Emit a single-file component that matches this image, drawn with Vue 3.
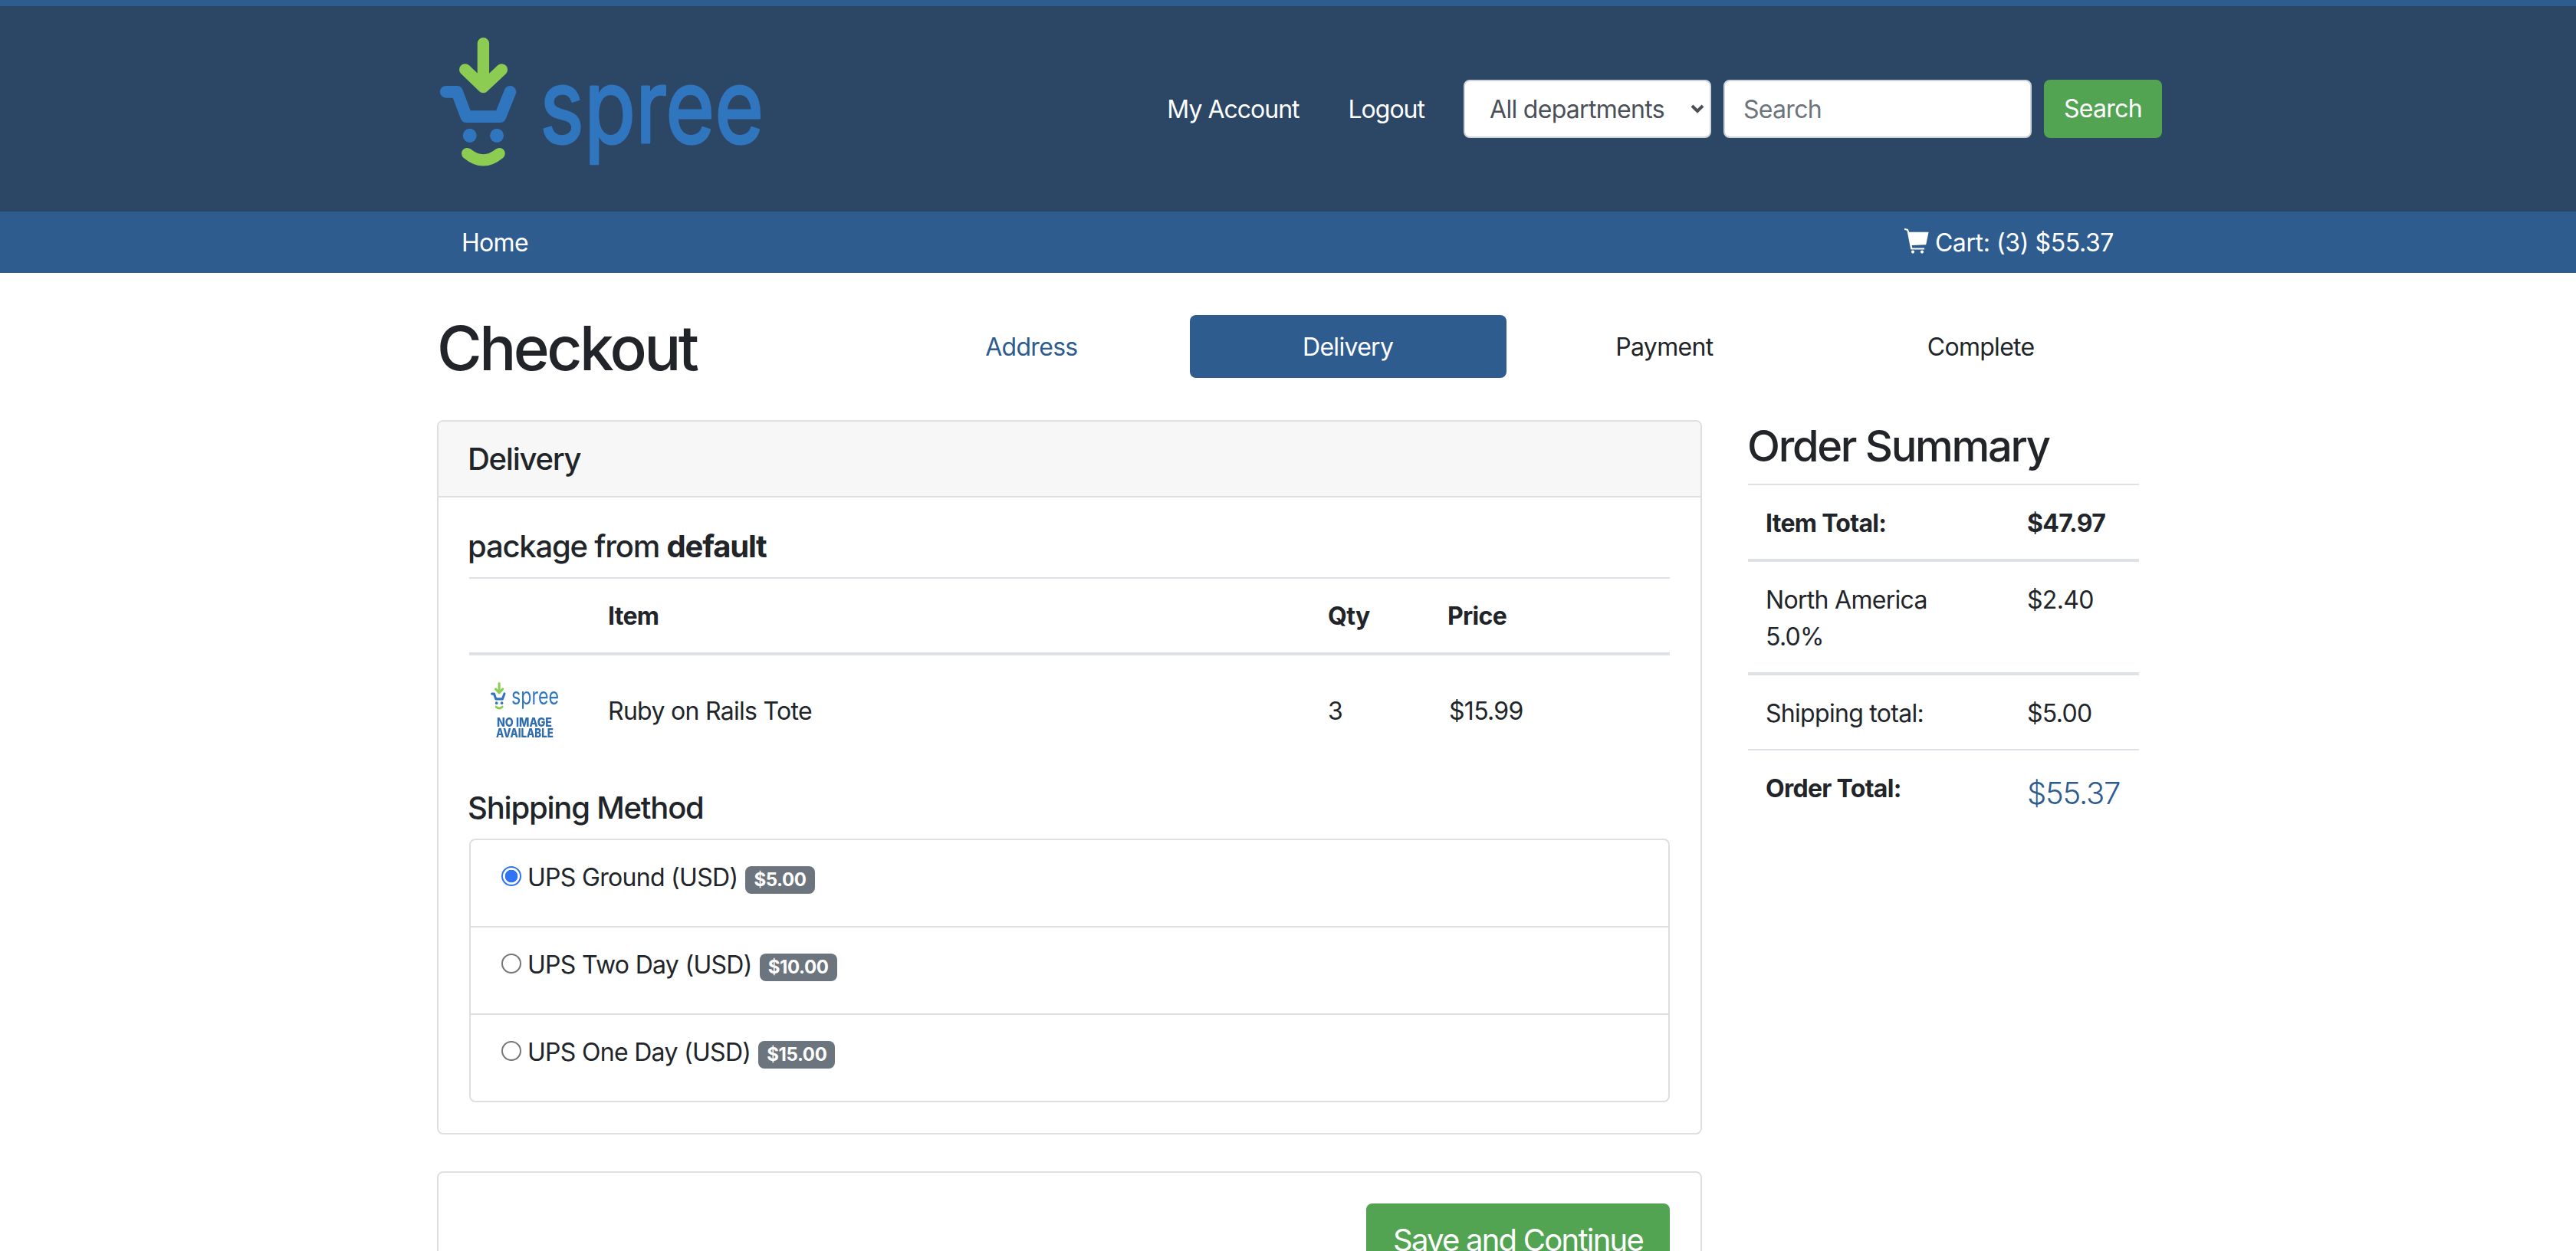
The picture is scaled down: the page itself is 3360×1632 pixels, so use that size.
<script setup>
const steps = [
  { label: 'Address', state: 'done' },
  { label: 'Delivery', state: 'active' },
  { label: 'Payment', state: '' },
  { label: 'Complete', state: '' }
]

const methods = [
  { name: 'UPS Ground (USD)', cost: '$5.00', checked: true },
  { name: 'UPS Two Day (USD)', cost: '$10.00', checked: false },
  { name: 'UPS One Day (USD)', cost: '$15.00', checked: false }
]
</script>

<template>
  <div class="page">
    <header class="masthead">
      <div class="container masthead-inner">
        <a class="logo" href="#" aria-label="Spree">
          <svg width="427" height="177" viewBox="150 130 1280 530">
            <g fill="none" stroke-linecap="round" stroke-linejoin="round">
              <path d="M331 168V338M260 270L331 338L403 270" stroke="#8ccc52" stroke-width="46" />
              <path d="M185 357H228L265 454H397L436 357" stroke="#3076bf" stroke-width="47" />
              <path d="M268 598Q331 650 394 598" stroke="#8ccc52" stroke-width="44" />
            </g>
            <circle cx="278" cy="528" r="27" fill="#3076bf" />
            <circle cx="384" cy="528" r="27" fill="#3076bf" />
            <text
              class="logo-word"
              x="552"
              y="555"
              textLength="875"
              lengthAdjust="spacingAndGlyphs"
            >spree</text>
          </svg>
        </a>
        <nav class="account-nav">
          <a href="#">My Account</a>
          <a href="#">Logout</a>
        </nav>
        <form class="search" @submit.prevent>
          <div class="select-wrap">
            <select class="dept">
              <option>All departments</option>
            </select>
            <svg class="chevron" width="20" height="14" viewBox="0 0 20 14">
              <path d="M3 3l7 7 7-7" fill="none" stroke="#495057" stroke-width="4" />
            </svg>
          </div>
          <input class="search-input" type="text" placeholder="Search" />
          <button class="search-btn" type="submit">Search</button>
        </form>
      </div>
    </header>

    <div class="mainbar">
      <div class="container mainbar-inner">
        <a href="#">Home</a>
        <a href="#" class="cart">
          <svg width="36" height="36" viewBox="70 50 105 105">
            <path
              fill="#fff"
              d="M76 55L90 59L94 70H168L158 118L104 120L106 130H152V136H100L86 64L76 62Z"
            />
            <circle cx="108" cy="145" r="6" fill="#fff" />
            <circle cx="143" cy="145" r="6" fill="#fff" />
          </svg>
          <span>Cart: (3) $55.37</span>
        </a>
      </div>
    </div>

    <main class="container content">
      <div class="checkout-head">
        <h1>Checkout</h1>
        <ol class="steps">
          <li v-for="step in steps" :key="step.label" :class="['step', step.state]">
            {{ step.label }}
          </li>
        </ol>
      </div>

      <div class="columns">
        <div class="left">
          <section class="card">
            <h2 class="card-header">Delivery</h2>
            <div class="card-body">
              <h5 class="package">package from <b>default</b></h5>
              <table class="items">
                <colgroup>
                  <col style="width: 157px" />
                  <col />
                  <col style="width: 156px" />
                  <col style="width: 314px" />
                </colgroup>
                <thead>
                  <tr>
                    <th></th>
                    <th>Item</th>
                    <th>Qty</th>
                    <th>Price</th>
                  </tr>
                </thead>
                <tbody>
                  <tr>
                    <td class="thumb-cell">
                      <div class="thumb">
                        <svg width="100" height="98" viewBox="0 0 100 98">
                          <g transform="translate(4 12) scale(0.065 0.071) translate(-160 -145)">
                            <g fill="none" stroke-linecap="round" stroke-linejoin="round">
                              <path d="M331 168V338M260 270L331 338L403 270" stroke="#8ccc52" stroke-width="46" />
                              <path d="M185 357H228L265 454H397L436 357" stroke="#3076bf" stroke-width="47" />
                              <path d="M268 598Q331 650 394 598" stroke="#8ccc52" stroke-width="44" />
                            </g>
                            <circle cx="278" cy="528" r="27" fill="#3076bf" />
                            <circle cx="384" cy="528" r="27" fill="#3076bf" />
                          </g>
                          <text class="thumb-word" x="31" y="41" textLength="62" lengthAdjust="spacingAndGlyphs">spree</text>
                          <text class="thumb-note" x="12" y="70" textLength="72" lengthAdjust="spacingAndGlyphs">NO IMAGE</text>
                          <text class="thumb-note" x="11" y="84" textLength="75" lengthAdjust="spacingAndGlyphs">AVAILABLE</text>
                        </svg>
                      </div>
                    </td>
                    <td>Ruby on Rails Tote</td>
                    <td>3</td>
                    <td class="unit-price">$15.99</td>
                  </tr>
                </tbody>
              </table>

              <h5 class="shipping-title">Shipping Method</h5>
              <ul class="methods">
                <li v-for="method in methods" :key="method.name" class="method">
                  <label>
                    <input type="radio" name="ship" :checked="method.checked" />
                    <span class="method-name">{{ method.name }}</span>
                    <span class="badge">{{ method.cost }}</span>
                  </label>
                </li>
              </ul>
            </div>
          </section>

          <section class="card actions">
            <button class="save" type="button">Save and Continue</button>
          </section>
        </div>

        <aside class="summary">
          <h3>Order Summary</h3>
          <table class="totals">
            <colgroup>
              <col style="width: 339px" />
              <col />
            </colgroup>
            <tbody>
              <tr class="heavy">
                <td><b>Item Total:</b></td>
                <td><b>$47.97</b></td>
              </tr>
              <tr class="heavy">
                <td>North America 5.0%</td>
                <td>$2.40</td>
              </tr>
              <tr>
                <td>Shipping total:</td>
                <td>$5.00</td>
              </tr>
              <tr class="grand">
                <td><b>Order Total:</b></td>
                <td class="grand-value">$55.37</td>
              </tr>
            </tbody>
          </table>
        </aside>
      </div>
    </main>
  </div>
</template>

<style>
html,
body {
  margin: 0;
  background: #fff;
}
</style>

<style scoped>
* {
  box-sizing: border-box;
}

svg {
  overflow: visible;
}

.page {
  height: 1632px;
  overflow: hidden;
  font-family: Inter, "Liberation Sans", sans-serif;
  font-size: 32px;
  line-height: 48px;
  letter-spacing: -0.7px;
  color: #212529;
}

a {
  color: #fff;
  text-decoration: none;
}

.container {
  width: 2280px;
  margin: 0 auto;
}

.masthead {
  height: 276px;
  background: #2c4766;
  border-top: 8px solid #2e5c8f;
}

.masthead-inner {
  height: 100%;
  display: flex;
  align-items: center;
}

.logo {
  display: block;
  margin: 0 0 20px 30px;
  height: 177px;
}

.logo-word {
  font-family: Inter, sans-serif;
  font-size: 400px;
  letter-spacing: 0;
  fill: #3076bf;
  stroke: #3076bf;
  stroke-width: 9px;
  stroke-linejoin: round;
}

.account-nav {
  margin-left: auto;
  margin-right: 51px;
  padding-top: 2px;
  display: flex;
  gap: 64px;
  letter-spacing: -1px;
}

.search {
  display: flex;
  gap: 16px;
}

.select-wrap {
  position: relative;
}

.dept,
.search-input,
.search-btn,
.save {
  font: inherit;
  letter-spacing: -0.7px;
}

.dept {
  display: block;
  width: 323px;
  height: 76px;
  padding: 2px 40px 0 32px;
  appearance: none;
  background: #fff;
  border: 2px solid #ced4da;
  border-radius: 8px;
  color: #495057;
}

.chevron {
  position: absolute;
  right: 8px;
  top: 31px;
  pointer-events: none;
}

.search-input {
  width: 402px;
  height: 76px;
  padding: 0 24px;
  background: #fff;
  border: 2px solid #ced4da;
  border-radius: 8px;
  color: #495057;
}

.search-input::placeholder {
  color: #6c757d;
  opacity: 1;
}

.search-btn {
  width: 154px;
  height: 76px;
  background: #52a452;
  border: 0;
  border-radius: 8px;
  color: #fff;
}

.mainbar {
  height: 80px;
  background: #2e5c8f;
}

.mainbar-inner {
  height: 100%;
  display: flex;
  align-items: center;
  justify-content: space-between;
  padding: 2px 63px 0 62px;
}

.cart {
  display: flex;
  align-items: center;
  gap: 6px;
  letter-spacing: -0.4px;
}

.cart svg {
  margin-top: -6px;
}

.content {
  padding: 0 30px;
}

.checkout-head {
  display: grid;
  grid-template-columns: 569px 1fr;
  align-items: center;
  padding: 55px 0;
}

h1 {
  margin: 0;
  font-size: 80px;
  line-height: 86px;
  height: 82px;
  font-weight: 500;
  letter-spacing: -3.5px;
}

.steps {
  display: grid;
  grid-template-columns: repeat(4, 1fr);
  margin: 0;
  padding: 0;
  list-style: none;
  text-align: center;
}

.step {
  height: 82px;
  line-height: 83px;
  border-radius: 8px;
}

.step.done {
  color: #2e5c8f;
}

.step.active {
  background: #2e5c8f;
  color: #fff;
}

.columns {
  display: grid;
  grid-template-columns: 1650px 510px;
  column-gap: 60px;
}

.card {
  border: 2px solid #dfdfdf;
  border-radius: 8px;
  margin-bottom: 48px;
}

.card-header {
  margin: 0;
  height: 99px;
  padding: 0 38px;
  background: #f7f7f7;
  border-bottom: 2px solid #dfdfdf;
  border-radius: 6px 6px 0 0;
  font-size: 40px;
  line-height: 97px;
  font-weight: 500;
  letter-spacing: -1.25px;
}

.card-body {
  padding: 40px;
}

h5 {
  margin: 0 0 16px -2px;
  font-size: 40px;
  line-height: 48px;
  font-weight: 500;
  letter-spacing: -1.2px;
}

.package b {
  font-weight: 700;
}

.items {
  width: 100%;
  table-layout: fixed;
  border-collapse: collapse;
  border-top: 2px solid #dee2e6;
}

.items th {
  padding: 25px 24px 23px;
  text-align: left;
  font-weight: 700;
  border-bottom: 4px solid #dee2e6;
}

.items td {
  height: 146px;
  padding: 2px 24px 0;
}

.items td.thumb-cell {
  padding: 0 0 0 24px;
}

.items td.unit-price {
  padding-left: 26px;
}

.thumb {
  filter: blur(0.7px);
  height: 98px;
}

.thumb-word {
  font-family: Inter, sans-serif;
  font-size: 30px;
  letter-spacing: 0;
  fill: #3076bf;
}

.thumb-note {
  font-family: Inter, sans-serif;
  font-size: 16px;
  font-weight: 800;
  letter-spacing: 0;
  fill: #2f6cb0;
}

.shipping-title {
  margin-top: 31px;
}

.methods {
  margin: 0;
  padding: 0;
  list-style: none;
  border: 2px solid #dfdfdf;
  border-radius: 8px;
}

.method {
  height: 114px;
  padding: 25px 40px 0;
  border-bottom: 2px solid #dfdfdf;
}

.method:last-child {
  height: 112px;
  border-bottom: 0;
}

.method label {
  display: flex;
  align-items: flex-start;
}

.method input {
  width: 26px;
  height: 26px;
  margin: 9px 8px 0 0;
  appearance: none;
  background: #fff;
  border: 2px solid #767676;
  border-radius: 50%;
}

.method input:checked {
  border-color: #2f74f6;
  background: radial-gradient(circle, #2f74f6 0 8px, #fff 8.6px);
}

.method-name {
  margin-right: 10px;
}

.badge {
  margin-top: 9px;
  height: 36px;
  padding: 0 11px;
  background: #6c757d;
  border-radius: 8px;
  font-size: 24px;
  line-height: 36px;
  font-weight: 700;
  letter-spacing: -0.4px;
  color: #fff;
}

.actions {
  height: 200px;
  padding: 40px;
  display: flex;
  justify-content: flex-end;
  align-items: flex-start;
}

.save {
  width: 396px;
  height: 96px;
  background: #52a452;
  border: 0;
  border-radius: 8px;
  font-size: 40px;
  letter-spacing: -1.76px;
  color: #fff;
}

h3 {
  margin: 0 0 16px -1px;
  height: 67px;
  font-size: 56px;
  line-height: 69px;
  font-weight: 500;
  letter-spacing: -2.3px;
}

.totals {
  width: 100%;
  table-layout: fixed;
  border-collapse: collapse;
  border-top: 2px solid #dee2e6;
}

.totals td {
  padding: 26px 25px 22px 23px;
  vertical-align: top;
  border-bottom: 2px solid #dee2e6;
}

.totals td:last-child {
  padding-left: 25px;
}

.totals .heavy td {
  border-bottom-width: 4px;
}

.totals .grand td {
  border-bottom: 0;
}

.totals .grand-value {
  font-size: 40px;
  font-weight: 300;
  line-height: 60px;
  letter-spacing: -1.2px;
  color: #2e5c8f;
}
</style>
